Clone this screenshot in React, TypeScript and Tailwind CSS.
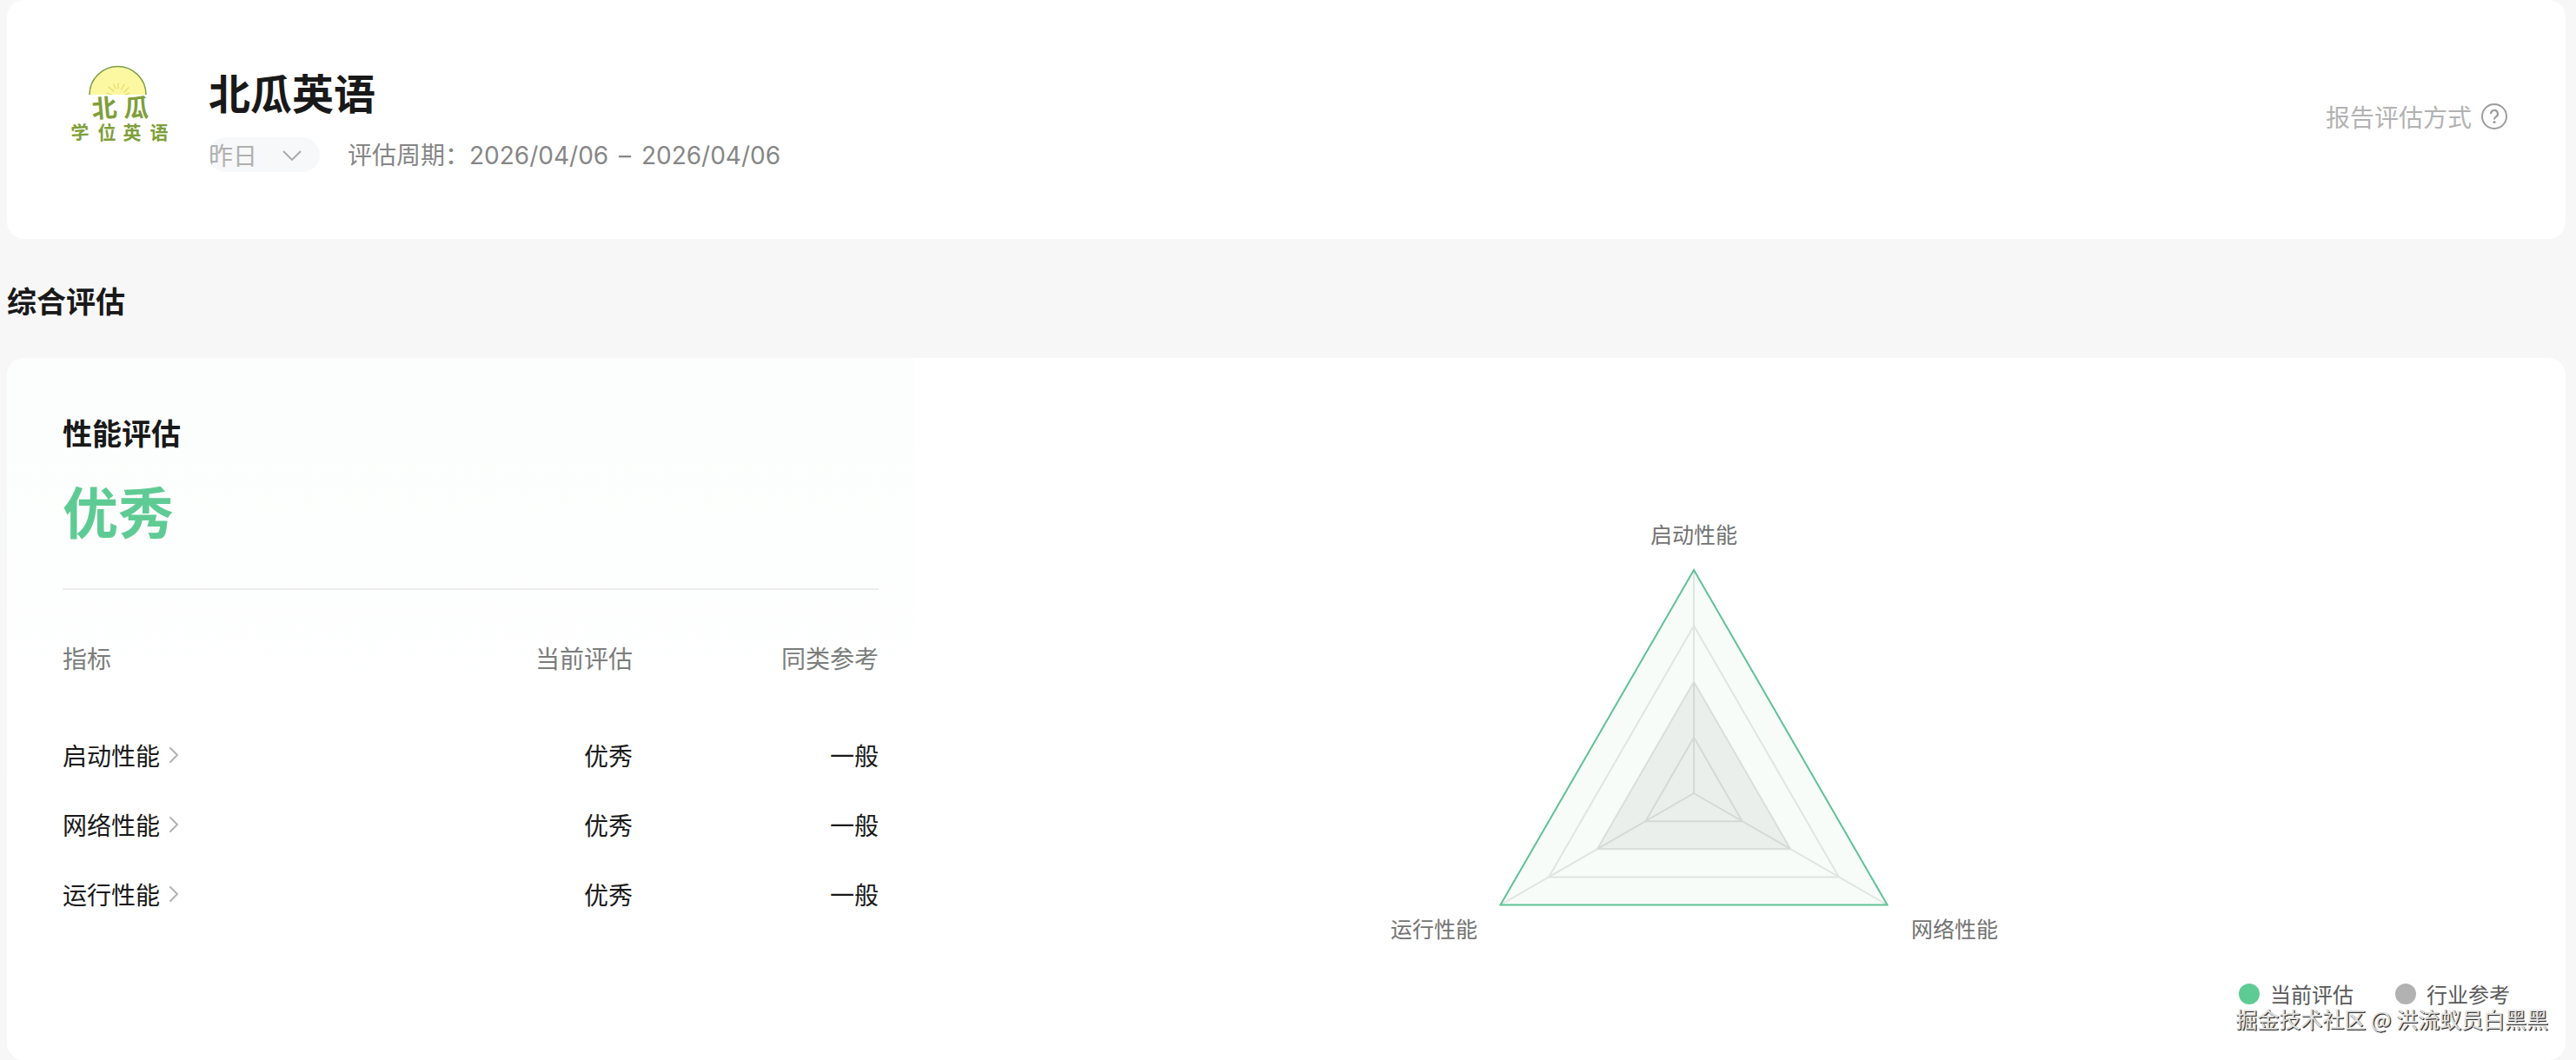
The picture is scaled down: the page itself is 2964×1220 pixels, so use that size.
import { ChevronRight } from "lucide-react";

const METRICS = [
  { name: "启动性能", current: "优秀", reference: "一般" },
  { name: "网络性能", current: "优秀", reference: "一般" },
  { name: "运行性能", current: "优秀", reference: "一般" },
];

const LEGEND = [
  { label: "当前评估", dot: "bg-[#5fcb94]" },
  { label: "行业参考", dot: "bg-[#b2b2b2]" },
];

const CX = 360;
const CY = 333;
const R = 257;

function ring(level: number) {
  return [-90, 30, 150]
    .map((deg) => {
      const a = (deg * Math.PI) / 180;
      return `${CX + R * level * Math.cos(a)},${CY + R * level * Math.sin(a)}`;
    })
    .join(" ");
}

function Logo() {
  return (
    <svg viewBox="0 0 128 120" className="h-30 w-32 shrink-0" role="img" aria-label="北瓜学位英语">
      <path d="M31 45a32.500 32.500 0 0 1 65 0Z" fill="#fcf8a2" />
      <path d="M31 45a32.500 32.500 0 0 1 65 0" fill="none" stroke="#7d9f4a" strokeWidth="1.600" />
      <g stroke="#e3d96c" strokeWidth="1.200" strokeLinecap="round" fill="none">
        <path d="M51 43l5 2M53 36l6 5M59 33l2 5M64 32v6M71 33l-3 6M76 37l-5 5M77 43l-5 2" />
      </g>
      <g fill="#7f9f3a" fontWeight="700" textAnchor="middle" className="font-['Noto_Sans_CJK_SC',sans-serif]">
        <text x="48" y="71" fontSize="29" transform="rotate(-5 48 61)">北</text>
        <text x="85" y="71" fontSize="29">瓜</text>
        <text x="20" y="96" fontSize="21" transform="rotate(-4 20 88)">学</text>
        <text x="51" y="96" fontSize="21">位</text>
        <text x="80" y="96" fontSize="21">英</text>
        <text x="111" y="96" fontSize="21">语</text>
      </g>
    </svg>
  );
}

function Header() {
  return (
    <header className="flex h-[275px] items-start justify-between rounded-[20px] bg-white pr-[66px] pl-16">
      <div className="flex gap-10 pt-16">
        <Logo />
        <div className="pt-[9px]">
          <h1 className="text-5xl leading-[64px] font-bold text-[#191919]">北瓜英语</h1>
          <div className="mt-5 flex items-center gap-8 text-[28px] leading-10">
            <div className="relative">
              <select
                aria-label="评估日期"
                className="block h-10 w-32 appearance-none rounded-full bg-[#f7f8fa] text-[28px] leading-10 text-[#b0b0b0]"
              >
                <option>昨日</option>
              </select>
              <svg
                viewBox="0 0 24 14"
                className="pointer-events-none absolute top-3.5 right-5 h-3.5 w-6"
                fill="none"
                stroke="#a6a6a6"
                strokeWidth="1.800"
              >
                <path d="M2 2l10 10L22 2" />
              </svg>
            </div>
            <p className="text-[#868686]">
              评估周期：
              <span className="font-[Inter,sans-serif]">
                2026/04/06 <span className="px-1">–</span> 2026/04/06
              </span>
            </p>
          </div>
        </div>
      </div>
      <button type="button" className="mt-[114px] flex items-center gap-2.5 text-[28px] leading-10 text-[#b2b2b2]">
        报告评估方式
        <svg viewBox="0 0 32 32" className="size-8" fill="none" stroke="#9c9c9c" strokeWidth="2">
          <circle cx="16" cy="16" r="14" />
          <path d="M12 13a4 4 0 1 1 6 3.400c-1.400.9-2 1.600-2 3.100" strokeWidth="2.200" />
          <circle cx="16" cy="22.500" r="1.600" fill="#9c9c9c" stroke="none" />
        </svg>
      </button>
    </header>
  );
}

function Summary() {
  return (
    <section className="w-[1044px] shrink-0 rounded-l-[20px] bg-linear-to-b from-[#fbfefc] to-white to-60% pr-[41px] pl-16">
      <h3 className="pt-[62px] text-[34px] leading-[48px] font-bold text-[#191919]">性能评估</h3>
      <p className="mt-5 text-[64px] leading-[88px] font-bold text-[#5fcb94]">优秀</p>
      <hr className="mt-[47px] border-t-2 border-[#ededed]" />
      <table className="mt-[58px] w-full table-fixed text-[28px] leading-10">
        <thead>
          <tr className="text-[#7b7d7c]">
            <th className="pb-13 text-left font-normal">指标</th>
            <th className="w-[283px] pb-13 text-right font-normal">当前评估</th>
            <th className="w-[283px] pb-13 text-right font-normal">同类参考</th>
          </tr>
        </thead>
        <tbody className="text-[#191919]">
          {METRICS.map((m) => (
            <tr key={m.name} className="h-20">
              <td>
                <a href="#" className="flex items-center">
                  {m.name}
                  <ChevronRight className="size-8 text-[#b2b2b2]" strokeWidth={1.5} />
                </a>
              </td>
              <td className="text-right">{m.current}</td>
              <td className="text-right">{m.reference}</td>
            </tr>
          ))}
        </tbody>
      </table>
    </section>
  );
}

function Radar() {
  return (
    <svg viewBox="0 0 720 520" className="h-[520px] w-[720px]" role="img" aria-label="性能雷达图">
      <g fill="none" stroke="#e6e8e7" strokeWidth="2">
        <polygon points={ring(0.25)} />
        <polygon points={ring(0.5)} />
        <polygon points={ring(0.75)} />
        {ring(1).split(" ").map((p) => (
          <polyline key={p} points={`${CX},${CY} ${p}`} />
        ))}
      </g>
      <polygon points={ring(1)} fill="#5fcb6f" fillOpacity="0.050" stroke="#5fc196" strokeWidth="2" />
      <polygon points={ring(0.5)} fill="#000000" fillOpacity="0.050" />
      <g fill="#737373" fontSize="25" textAnchor="middle">
        <text x="360" y="45">启动性能</text>
        <text x="61" y="499">运行性能</text>
        <text x="660" y="499">网络性能</text>
      </g>
    </svg>
  );
}

function ChartPanel() {
  return (
    <section className="relative flex flex-1 flex-col items-center pt-[168px]">
      <div className="pr-[106px]">
        <Radar />
      </div>
      <ul className="mt-7 flex gap-12 self-end pr-16 text-2xl leading-8 text-[#595959]">
        {LEGEND.map((item) => (
          <li key={item.label} className="flex items-center gap-3">
            <span className={`size-6 rounded-full ${item.dot}`} />
            {item.label}
          </li>
        ))}
      </ul>
      <p className="absolute right-5 bottom-8 text-[25px] leading-8 text-[#e2e2e2] [text-shadow:1px_1px_0_#333,1px_1px_1px_#333]">
        掘金技术社区 @ 洪流蚁员白黑黑
      </p>
    </section>
  );
}

export default function App() {
  return (
    <main className="min-h-screen bg-[#f7f7f7] pr-3 pl-2 font-['Noto_Sans_CJK_SC',sans-serif]">
      <Header />
      <h2 className="pt-[46px] pb-[42px] text-[34px] leading-[49px] font-bold text-[#191919]">综合评估</h2>
      <div className="flex min-h-[808px] rounded-[20px] bg-white">
        <Summary />
        <ChartPanel />
      </div>
    </main>
  );
}
